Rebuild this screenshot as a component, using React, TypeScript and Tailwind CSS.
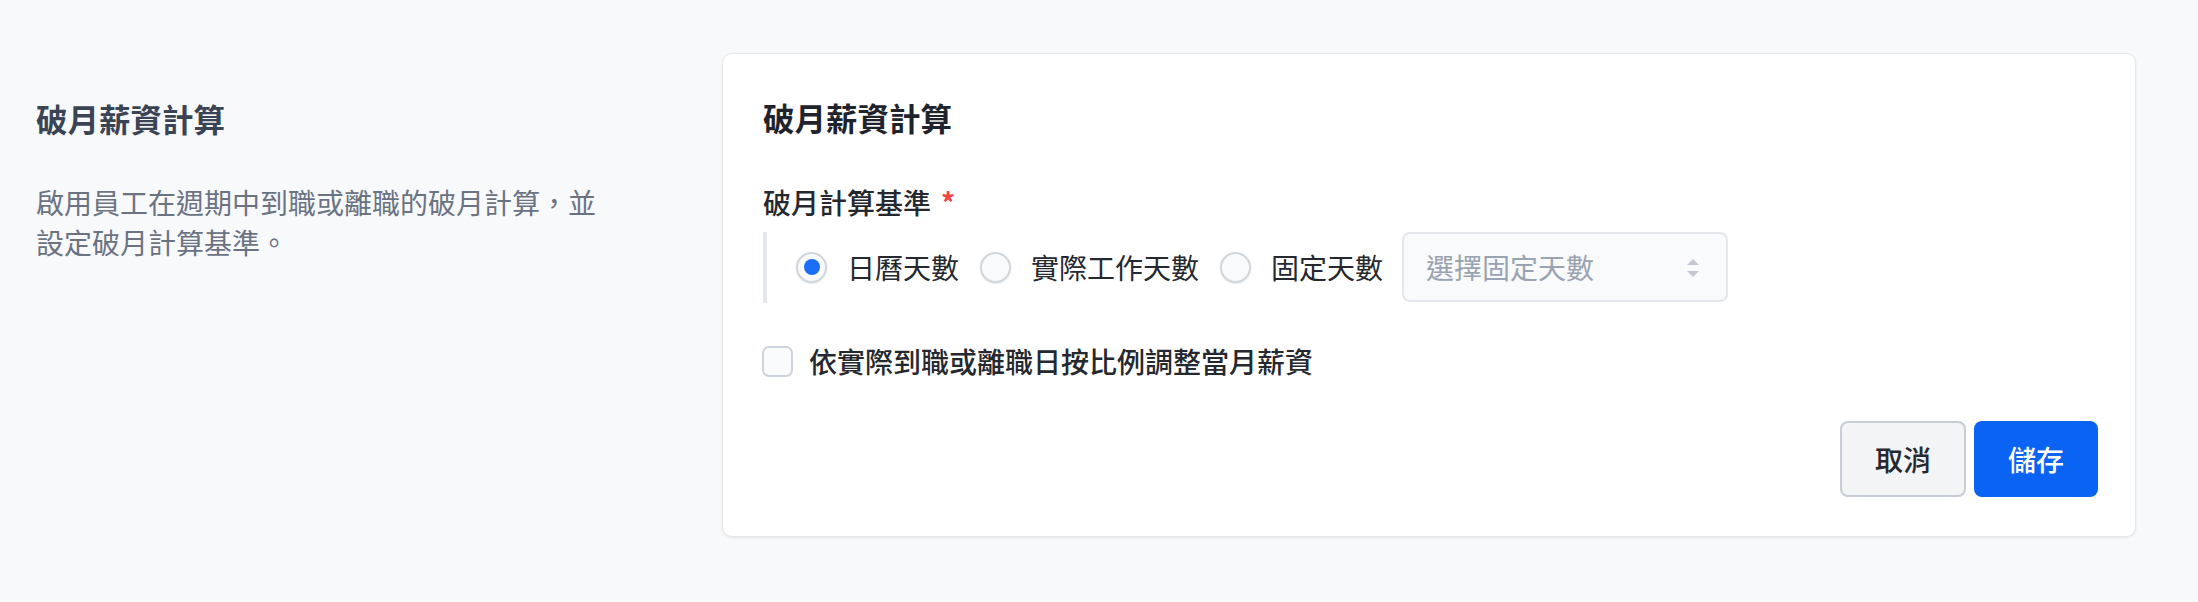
import React from "react";

function Radio({ checked, label }: { checked?: boolean; label: string }) {
  return (
    <label className="flex items-center gap-[20px] cursor-pointer">
      <span className="flex h-[31px] w-[31px] shrink-0 items-center justify-center rounded-full border-2 border-[#d1d6dd] bg-[#f9fafb] shadow-[0_1px_2px_rgba(0,0,0,0.08)]">
        {checked && <span className="h-[16px] w-[16px] rounded-full bg-[#1a6df5]" />}
      </span>
      <span className="text-[28px] leading-[40px] text-[#25282e]">{label}</span>
    </label>
  );
}

export default function App() {
  return (
    <div className="min-h-[602px] w-full bg-[#f8f9fb] flex items-start pt-[53px] font-['Noto_Sans_CJK_TC','Noto_Sans',sans-serif]">
      <div className="w-[722px] shrink-0 pl-[36px] pt-[43px]">
        <h2 className="text-[31.5px] leading-[44px] font-bold text-[#3b4454]">破月薪資計算</h2>
        <p className="mt-[42px] w-[575px] text-[28px] leading-[40px] text-[#6b7383]">
          啟用員工在週期中到職或離職的破月計算，並設定破月計算基準。
        </p>
      </div>
      <div className="w-[1414px] shrink-0 rounded-[10px] border border-[#e5e7eb] bg-white pt-[41px] pl-[40px] pr-[37px] pb-[39px] shadow-[0_1px_3px_rgba(0,0,0,0.08)]">
        <h3 className="text-[31.5px] leading-[44px] font-bold text-[#1f232b]">破月薪資計算</h3>
        <div className="mt-[43px] flex items-center text-[28px] leading-[40px] font-medium text-[#25282e]">
          <span>破月計算基準</span>
          <span className="ml-[10px] font-bold text-[#ef4444]">*</span>
        </div>
        <div className="mt-[16px] h-[71px] border-l-[4px] border-[#e4e7ec] pl-[29px]">
          <div className="-mt-[6px] flex items-center gap-[21px]">
            <Radio checked label="日曆天數" />
            <Radio label="實際工作天數" />
            <Radio label="固定天數" />
            <div className="-ml-[2px] flex h-[70px] w-[326px] items-center justify-between rounded-[8px] border-2 border-[#e4e7ec] bg-[#f9fafb] pl-[22px] pr-[27px]">
              <span className="text-[28px] leading-[40px] text-[#9aa3b1]">選擇固定天數</span>
              <svg width="12" height="18" viewBox="0 0 12 18" className="mt-[2px]">
                <polygon points="6,0 12,6 0,6" fill="#c3c9d2" />
                <polygon points="0,12 12,12 6,18" fill="#c3c9d2" />
              </svg>
            </div>
          </div>
        </div>
        <label className="mt-[38px] flex items-center gap-[16px]">
          <span className="-ml-[1px] h-[31px] w-[31px] shrink-0 rounded-[7px] border-2 border-[#cdd4dd] bg-[#f9fafb]" />
          <span className="text-[28px] leading-[40px] font-medium text-[#25282e]">依實際到職或離職日按比例調整當月薪資</span>
        </label>
        <div className="mt-[40px] flex justify-end gap-[8px]">
          <button className="h-[76px] w-[126px] rounded-[8px] border-2 border-[#c6cdd6] bg-[#f3f4f6] text-[28px] font-medium text-[#25282e]">
            取消
          </button>
          <button className="h-[76px] w-[124px] rounded-[8px] bg-[#0b63f3] text-[28px] font-medium text-white">
            儲存
          </button>
        </div>
      </div>
    </div>
  );
}
